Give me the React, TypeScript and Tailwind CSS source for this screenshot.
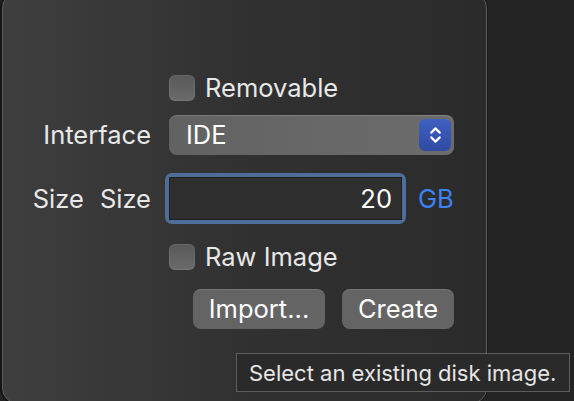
import { ChevronUp, ChevronDown } from 'lucide-react'

const font = { fontFamily: 'Inter, "Noto Sans", sans-serif' }

function Checkbox({ label }: { label: string }) {
  return (
    <label className="flex items-center gap-[10px]">
      <span className="h-[26px] w-[26px] rounded-[6px] bg-linear-to-b from-[#595959] to-[#6b6b6b] shadow-[inset_0_0_0_1px_rgba(255,255,255,0.08)]" />
      <span className="text-[25.5px] leading-none text-[#e8e8e8]">{label}</span>
    </label>
  )
}

export default function App() {
  return (
    <div
      style={font}
      className="relative h-[401px] w-[574px] overflow-hidden bg-[#242424]"
    >
      <div className="ml-[2px] mt-[-8px] flex h-[412px] w-[485px] flex-col rounded-[16px] border border-[#5c5c5c] bg-linear-to-r from-[#3e3e3e] via-[#313131] to-[#2b2b2b] pl-[33px] pt-[82px] shadow-[-2px_0_0_#151515,1px_0_0_#1a1a1a]">
        {/* removable */}
        <div className="ml-[133px]">
          <Checkbox label="Removable" />
        </div>

        {/* interface */}
        <div className="mt-[14px] flex items-center">
          <span className="w-[115px] text-right text-[25.5px] leading-none text-[#e8e8e8]">
            Interface
          </span>
          <div className="ml-[18px] flex h-[40px] w-[285px] items-center justify-between rounded-[8px] bg-linear-to-r from-[#626262] to-[#6c6c6c] pl-[17px] pr-[3px] shadow-[inset_0_1px_0_rgba(255,255,255,0.15)]">
            <span className="text-[25.5px] leading-none text-white">IDE</span>
            <span className="flex h-[32px] w-[32px] flex-col items-center justify-center rounded-[6px] bg-linear-to-b from-[#3f5fc0] to-[#2f4ba3] text-white">
              <ChevronUp size={17} strokeWidth={3} className="-mb-[4px]" />
              <ChevronDown size={17} strokeWidth={3} className="-mt-[4px]" />
            </span>
          </div>
        </div>

        {/* size */}
        <div className="mt-[18px] flex items-center">
          <span className="flex w-[115px] justify-end gap-[16px] text-[25.5px] leading-none text-[#e8e8e8]">
            <span>Size</span>
            <span>Size</span>
          </span>
          <div className="ml-[14px] h-[51px] w-[241px] rounded-[7px] bg-[#4f6e97] p-[4px]">
            <div className="flex h-full items-center justify-end border border-[#1e1e1e] bg-[#2f2f2f] pr-[9px]">
              <span className="text-[25.5px] leading-none text-white">20</span>
            </div>
          </div>
          <span className="ml-[12px] text-[25.5px] leading-none text-[#3b82f6]">GB</span>
        </div>

        {/* raw image */}
        <div className="ml-[133px] mt-[20px]">
          <Checkbox label="Raw Image" />
        </div>

        {/* buttons */}
        <div className="mt-[19px] flex w-[418px] justify-end gap-[17px]">
          <button className="h-[40px] w-[132px] rounded-[8px] bg-[#646464] text-[25.5px] leading-none text-white shadow-[inset_0_1px_0_rgba(255,255,255,0.12)]">
            Import...
          </button>
          <button className="h-[40px] w-[112px] rounded-[8px] bg-[#646464] text-[25.5px] leading-none text-white shadow-[inset_0_1px_0_rgba(255,255,255,0.12)]">
            Create
          </button>
        </div>
      </div>

      {/* tooltip */}
      <div className="absolute left-[236px] top-[353px] flex h-[39px] w-[334px] items-center border border-[#5e5e5e] bg-[#2a2a2a] pl-[12px] text-[22px] leading-none text-[#e6e6e6]">
        Select an existing disk image.
      </div>
    </div>
  )
}
